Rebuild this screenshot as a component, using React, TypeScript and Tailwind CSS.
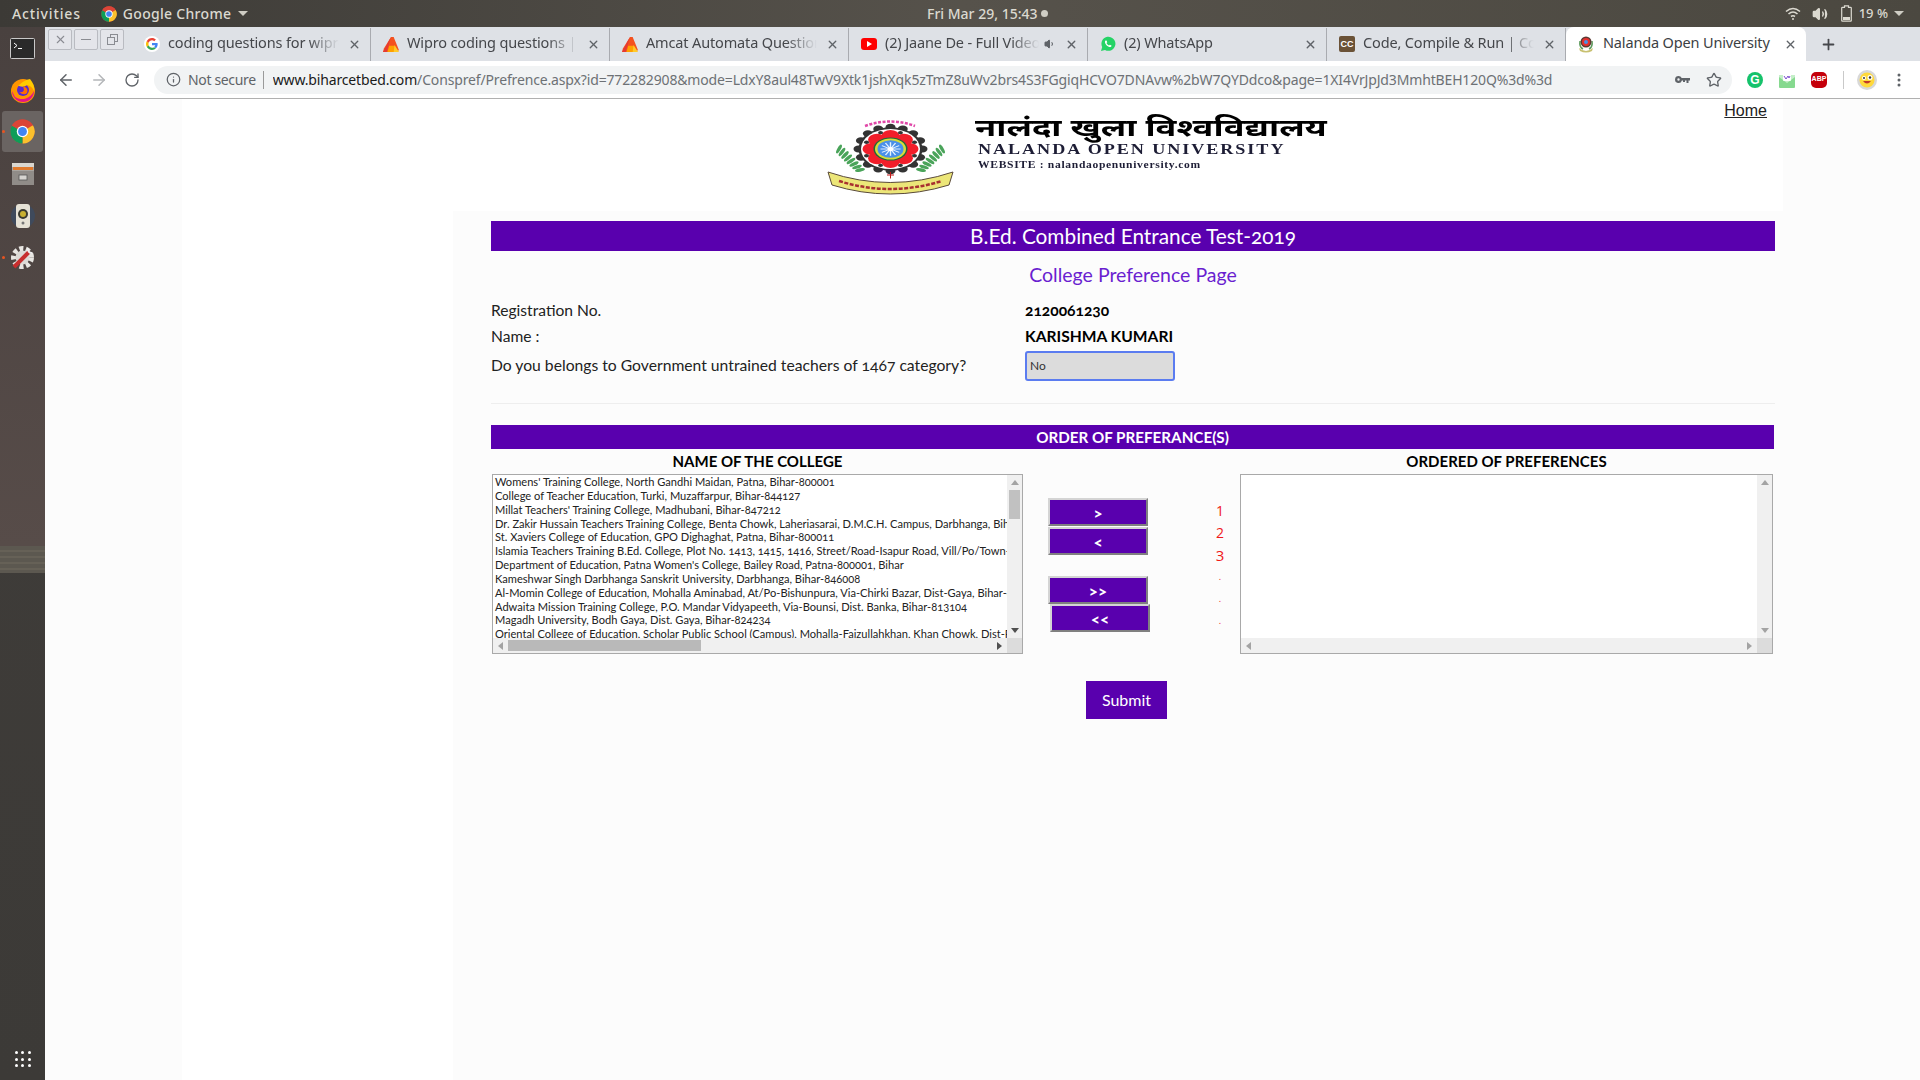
import React from "react";
import { ArrowLeft, ArrowRight, RotateCw, Info, Star, X, Plus, Volume2, Volume1 } from "lucide-react";

const colleges = [
  "Womens' Training College, North Gandhi Maidan, Patna, Bihar-800001",
  "College of Teacher Education, Turki, Muzaffarpur, Bihar-844127",
  "Millat Teachers' Training College, Madhubani, Bihar-847212",
  "Dr. Zakir Hussain Teachers Training College, Benta Chowk, Laheriasarai, D.M.C.H. Campus, Darbhanga, Bihar-846003",
  "St. Xaviers College of Education, GPO Dighaghat, Patna, Bihar-800011",
  "Islamia Teachers Training B.Ed. College, Plot No. 1413, 1415, 1416, Street/Road-Isapur Road, Vill/Po/Town-Phulwari Sharif",
  "Department of Education, Patna Women's College, Bailey Road, Patna-800001, Bihar",
  "Kameshwar Singh Darbhanga Sanskrit University, Darbhanga, Bihar-846008",
  "Al-Momin College of Education, Mohalla Aminabad, At/Po-Bishunpura, Via-Chirki Bazar, Dist-Gaya, Bihar-824231",
  "Adwaita Mission Training College, P.O. Mandar Vidyapeeth, Via-Bounsi, Dist. Banka, Bihar-813104",
  "Magadh University, Bodh Gaya, Dist. Gaya, Bihar-824234",
  "Oriental College of Education, Scholar Public School (Campus), Mohalla-Faizullahkhan, Khan Chowk, Dist-Patna, Bihar",
];

function ChromeLogo({ size = 16 }: { size?: number }) {
  return (
    <svg width={size} height={size} viewBox="0 0 48 48">
      <circle cx="24" cy="24" r="23" fill="#db4437" />
      <path d="M24 24 L44 12 A23 23 0 0 1 24 47 Z" fill="#fbc02d" />
      <path d="M24 24 L24 47 A23 23 0 0 1 3.5 13 Z" fill="#0f9d58" />
      <path d="M24 1 A23 23 0 0 1 44 12 L24 14 A10 10 0 0 0 15 19 L4 12 A23 23 0 0 1 24 1 Z" fill="#db4437" />
      <circle cx="24" cy="24" r="11" fill="#fff" />
      <circle cx="24" cy="24" r="8.5" fill="#4285f4" />
    </svg>
  );
}

function GoogleIcon() {
  return (
    <svg width="16" height="16" viewBox="0 0 48 48">
      <circle cx="24" cy="24" r="24" fill="#fff" />
      <path d="M41 24.5c0-1.300-.1-2.300-.3-3.400H24v6.300h9.700c-.4 2.200-1.700 4-3.600 5.300l5.600 4.300C39 34 41 29.700 41 24.500z" fill="#4285f4" />
      <path d="M24 42c4.700 0 8.700-1.600 11.700-4.200l-5.600-4.300c-1.600 1.100-3.600 1.700-6.100 1.700-4.600 0-8.600-3.100-10-7.300l-5.800 4.500C11.100 38.200 17.100 42 24 42z" fill="#34a853" />
      <path d="M14 27.900c-.4-1.100-.6-2.400-.6-3.900s.2-2.700.6-3.900l-5.800-4.500C7 18 6 20.900 6 24s1 6 2.200 8.400z" fill="#fbbc05" />
      <path d="M24 13c2.600 0 4.900.9 6.700 2.600l5-5C32.700 7.800 28.700 6 24 6 17.100 6 11.100 9.800 8.200 15.600l5.800 4.500c1.400-4.200 5.400-7.100 10-7.100z" fill="#ea4335" />
    </svg>
  );
}

function AmcatIcon() {
  return (
    <svg width="18" height="17" viewBox="0 0 18 17">
      <path d="M9 0 L12 0 L18 15 L13 17 L0 17 L1 13 Z" fill="#f4511e" />
      <path d="M9 0 L4 17 L0 17 Z" fill="#e53935" />
      <path d="M7 10 L13 10 L16 17 L5 17 Z" fill="#ffa000" />
      <path d="M13 9 L18 17 L12 17 Z" fill="#ffca28" />
    </svg>
  );
}

function YoutubeIcon() {
  return (
    <svg width="16" height="14" viewBox="0 0 16 14">
      <rect x="0" y="1" width="16" height="12" rx="3" fill="#f00" />
      <path d="M6 4 L11 7 L6 10 Z" fill="#fff" />
    </svg>
  );
}

function WhatsappIcon() {
  return (
    <svg width="16" height="16" viewBox="0 0 16 16">
      <path d="M1 15 L2.200 11 A7 7 0 1 1 5 13.900 Z" fill="#25d366" />
      <path d="M5.500 4.500 C4.500 5.500 4.800 7.300 6.500 9.200 C8.300 11 10.200 11.500 11.300 10.500 L11.500 9.500 L9.800 8.700 L9 9.500 C8 9 7 8 6.500 7 L7.300 6.200 L6.500 4.500 Z" fill="#fff" />
    </svg>
  );
}

function CcIcon() {
  return (
    <div className="flex h-[16px] w-[16px] items-center justify-center rounded-[2px] bg-[#6b5237] font-['Liberation_Sans',sans-serif] text-[9px] font-bold leading-none text-white">
      CC
    </div>
  );
}

function MiniSeal() {
  return (
    <svg width="18" height="18" viewBox="0 0 18 18">
      <path d="M2 13 Q9 19 16 13 L15 16 Q9 19 3 16 Z" fill="#c8c070" />
      <path d="M3 6 Q2 12 6 14 M15 6 Q16 12 12 14" stroke="#5c9a5c" strokeWidth="1.500" fill="none" />
      <circle cx="9" cy="7" r="5.500" fill="#5c3a32" />
      <circle cx="9" cy="7" r="4" fill="#e53030" />
      <circle cx="9" cy="7" r="2" fill="#4a90e2" />
    </svg>
  );
}

function Seal() {
  const petals = [0, 45, 90, 135, 180, 225, 270, 315];
  const scallops = Array.from({ length: 16 }, (_, i) => i * 22.5);
  const leaves = [0, 1, 2, 3, 4, 5, 6, 7];
  return (
    <svg width="127" height="78" viewBox="0 0 127 78" className="shrink-0">
      <path d="M38 7 Q63 -2 88 7" fill="none" stroke="#e048a8" strokeWidth="2.500" strokeDasharray="3 1.500" />
      {leaves.map((i) => (
        <g key={i}>
          <ellipse cx={12 + i * 3} cy={30 + i * 3} rx="5" ry="1.700" fill="#4aa45a" transform={`rotate(${-60 + i * 7} ${12 + i * 3} ${30 + i * 3})`} />
          <ellipse cx={115 - i * 3} cy={30 + i * 3} rx="5" ry="1.700" fill="#4aa45a" transform={`rotate(${60 - i * 7} ${115 - i * 3} ${30 + i * 3})`} />
        </g>
      ))}
      <g transform="translate(63.500 30) scale(1 .68)">
        {scallops.map((a) => (
          <circle key={a} cx={32 * Math.cos((a * Math.PI) / 180)} cy={32 * Math.sin((a * Math.PI) / 180)} r="5" fill="#333" />
        ))}
        <circle r="32" fill="#333" />
        <circle r="29.500" fill="#fff" />
        {petals.map((a) => (
          <ellipse key={a} cx={19 * Math.cos((a * Math.PI) / 180)} cy={19 * Math.sin((a * Math.PI) / 180)} rx="9" ry="9" fill="#f21e2a" />
        ))}
        {petals.map((a) => (
          <circle key={a} cx={26 * Math.cos(((a + 22.5) * Math.PI) / 180)} cy={26 * Math.sin(((a + 22.5) * Math.PI) / 180)} r="2.500" fill="#333" />
        ))}
        <circle r="17" fill="#1d6a3a" />
        <circle r="15.500" fill="#d6dc3a" />
        <circle r="13" fill="#4a90e8" />
        {[0, 30, 60, 90, 120, 150].map((a) => (
          <rect key={a} x="-10" y="-.7" width="20" height="1.400" fill="#e8f2ff" transform={`rotate(${a})`} />
        ))}
        <circle r="3" fill="#fff" />
      </g>
      <path d="M1 53 Q63 74 126 53 L122 66 Q63 84 5 66 Z" fill="#ece678" stroke="#5a4a3a" strokeWidth="1" />
      <path d="M12 62 Q63 78 115 62" fill="none" stroke="#a83030" strokeWidth="2.500" strokeDasharray="4 1.500" />
      <path d="M60 56 h7 M63.500 53 v6.500" stroke="#c01818" strokeWidth="1" />
    </svg>
  );
}

function Tab({ icon, title, muted }: { icon: React.ReactNode; title: string; muted?: boolean }) {
  return (
    <div className="flex h-[33px] w-[239px] shrink-0 items-center border-r border-[#a9abb0] pl-[12px] pr-[9px]">
      <div className="flex w-[16px] shrink-0 items-center justify-center">{icon}</div>
      <div className="ml-[8px] min-w-0 flex-1 overflow-hidden whitespace-nowrap pb-[2px] text-[14.5px] tracking-[-0.15px] text-[#45474b] [mask-image:linear-gradient(to_right,black_82%,transparent)]">
        {title}
      </div>
      {muted && <Volume1 size={12} className="ml-[5px] shrink-0 fill-[#5f6368] text-[#5f6368]" />}
      <X size={13} strokeWidth={2.5} className="ml-[9px] shrink-0 text-[#5f6368]" />
    </div>
  );
}

function WinBtn({ children }: { children: React.ReactNode }) {
  return (
    <div className="flex h-[21px] w-[24px] items-center justify-center rounded-[2px] border border-[#b9bbc1] bg-[#e4e5ea] text-[#8a8c92]">
      {children}
    </div>
  );
}

function DockItem({ children, active, dot }: { children: React.ReactNode; active?: boolean; dot?: boolean }) {
  return (
    <div className={`relative flex h-[41px] w-[41px] items-center justify-center rounded-[3px] ${active ? "bg-[#6a6462]" : ""}`}>
      {dot && <span className="absolute left-[-0.5px] top-[19px] h-[3px] w-[3px] rounded-full bg-[#e95420]" />}
      {children}
    </div>
  );
}

function ArrowUp() {
  return <div className="h-0 w-0 border-x-[4px] border-b-[5px] border-x-transparent border-b-[#a3a3a3]" />;
}
function ArrowDown() {
  return <div className="h-0 w-0 border-x-[4px] border-t-[5px] border-x-transparent border-t-[#505050]" />;
}
function ArrowDownLight() {
  return <div className="h-0 w-0 border-x-[4px] border-t-[5px] border-x-transparent border-t-[#a3a3a3]" />;
}
function ArrowLeftTri() {
  return <div className="h-0 w-0 border-y-[4px] border-r-[5px] border-y-transparent border-r-[#a3a3a3]" />;
}
function ArrowRightTri({ dark }: { dark?: boolean }) {
  return <div className={`h-0 w-0 border-y-[4px] border-l-[5px] border-y-transparent ${dark ? "border-l-[#505050]" : "border-l-[#a3a3a3]"}`} />;
}

function ListBox({ items, width }: { items: string[]; width: string }) {
  const filled = items.length > 0;
  return (
    <div className={`flex h-[180px] flex-col border border-[#a9a9a9] bg-white ${width}`}>
      <div className="flex min-h-0 flex-1">
        <div className="min-w-0 flex-1 overflow-hidden pl-[2px] text-[11.1px] leading-[13.85px] text-[#222]">
          {items.map((t) => (
            <div key={t} className="whitespace-nowrap">{t}</div>
          ))}
        </div>
        <div className="flex w-[15px] shrink-0 flex-col items-center bg-[#f0f0f0]">
          <div className="flex h-[15px] items-center justify-center"><ArrowUp /></div>
          {filled && <div className="h-[29px] w-[11px] bg-[#c1c1c1]" />}
          <div className="mt-auto flex h-[15px] items-center justify-center">{filled ? <ArrowDown /> : <ArrowDownLight />}</div>
        </div>
      </div>
      <div className="flex h-[15px] shrink-0 bg-[#f0f0f0]">
        <div className="flex w-[15px] items-center justify-center"><ArrowLeftTri /></div>
        {filled && <div className="my-[2px] w-[193px] bg-[#b9b9b9]" />}
        <div className="ml-auto flex w-[15px] items-center justify-center"><ArrowRightTri dark={filled} /></div>
        <div className="w-[15px] bg-[#dcdcdc]" />
      </div>
    </div>
  );
}

function MoveBtn({ label, className = "" }: { label: string; className?: string }) {
  return (
    <div className={`flex h-[28px] w-[100px] items-center justify-center border-2 border-b-[#808080] border-l-[#d4d4d4] border-r-[#808080] border-t-[#d4d4d4] bg-[#5900ae] text-[17px] font-bold leading-none text-white ${className}`}>
      {label}
    </div>
  );
}

export default function App() {
  return (
    <div className="flex h-screen w-full flex-col overflow-hidden bg-white font-['Noto_Sans',sans-serif]">
      {/* GNOME top bar */}
      <div className="flex h-[27px] shrink-0 items-center bg-gradient-to-r from-[#3c3a36] via-[#56524b] to-[#4b4840] text-[14px] text-[#dbd9d0]">
        <div className="flex w-[927px] shrink-0 items-center">
          <span className="ml-[12px] font-medium tracking-[0.85px]">Activities</span>
          <span className="ml-[20px]"><ChromeLogo size={16} /></span>
          <span className="ml-[6px] font-medium tracking-[0.3px]">Google Chrome</span>
          <div className="ml-[7px] h-0 w-0 border-x-[5px] border-t-[5px] border-x-transparent border-t-[#cfcdc4]" />
        </div>
        <span className="font-medium">Fri Mar 29, 15:43</span>
        <span className="ml-[4px] h-[7px] w-[7px] rounded-full bg-[#cfcdc4]" />
        <div className="ml-auto flex items-center pr-[16px]">
          <svg width="16" height="14" viewBox="0 0 16 14" fill="none" stroke="#dbd9d0" strokeWidth="1.600">
            <path d="M1 4.500 Q8 -1.500 15 4.500" />
            <path d="M3.500 7 Q8 3 12.500 7" />
            <path d="M6 9.500 Q8 8 10 9.500" />
            <circle cx="8" cy="12" r="1" fill="#dbd9d0" stroke="none" />
          </svg>
          <Volume2 size={16} className="ml-[11px] fill-[#dbd9d0] text-[#dbd9d0]" />
          <svg width="11" height="17" viewBox="0 0 11 17" className="ml-[13px]">
            <path d="M3.500 .8 h4 v1.500 h2 a.8.8 0 0 1 .8.8 v12.300 a.8.8 0 0 1 -.8.8 h-8 a.8.8 0 0 1 -.8-.8 V3.100 a.8.8 0 0 1 .8-.8 h2 z" fill="none" stroke="#dbd9d0" strokeWidth="1.200" />
            <rect x="2" y="12" width="7" height="3" fill="#dbd9d0" />
          </svg>
          <span className="ml-[7px] text-[13px] font-medium">19 %</span>
          <div className="ml-[6px] h-0 w-0 border-x-[5px] border-t-[5px] border-x-transparent border-t-[#cfcdc4]" />
        </div>
      </div>

      <div className="flex min-h-0 flex-1">
        {/* Dock */}
        <div className="flex w-[45px] shrink-0 flex-col items-center bg-gradient-to-b from-[#403d3a] to-[#3c3a37]">
          <div className="flex h-[519px] w-full flex-col items-center bg-gradient-to-b from-[#49413f] to-[#574c49] pt-[1px]">
            <DockItem>
              <svg width="25" height="21" viewBox="0 0 25 21">
                <rect x=".5" y=".5" width="24" height="20" rx="1" fill="#2a2a2a" stroke="#c9c9c9" />
                <path d="M4 5 L7 7.500 L4 10" stroke="#fff" strokeWidth="1" fill="none" />
                <path d="M8 10.500 H12" stroke="#fff" strokeWidth="1" />
              </svg>
            </DockItem>
            <DockItem>
              <svg width="26" height="26" viewBox="0 0 26 26">
                <circle cx="13" cy="14" r="12" fill="#ff9500" />
                <path d="M2 14 A11 11 0 0 0 24 14 A13 13 0 0 1 5 20 Z" fill="#e31587" />
                <circle cx="13" cy="13" r="6" fill="#592acb" />
                <path d="M8 9 Q14 3 20 2 Q25 8 24 14 Q22 9 17 8 Q14 11 9 9 Z" fill="#ffcb00" />
                <path d="M13 9 Q19 11 17 16 Q14 19 9 15 Q13 16 14 13 Z" fill="#ff6d00" />
              </svg>
            </DockItem>
            <div className="h-[1px]" />
            <DockItem active dot><ChromeLogo size={25} /></DockItem>
            <div className="h-[1px]" />
            <DockItem>
              <svg width="24" height="24" viewBox="0 0 24 24">
                <rect x="1" y="1" width="22" height="22" rx="2" fill="#a9a5a0" />
                <rect x="1" y="1" width="22" height="4" fill="#d9d6d0" />
                <rect x="2" y="5" width="20" height="3" fill="#e07a2e" />
                <rect x="1" y="9" width="22" height="14" fill="#908c88" />
                <rect x="8" y="13" width="8" height="5" fill="#d6d4d0" stroke="#555" strokeWidth=".8" />
              </svg>
            </DockItem>
            <div className="h-[1px]" />
            <DockItem>
              <svg width="24" height="26" viewBox="0 0 24 26">
                <circle cx="12" cy="13" r="12" fill="#3f4a5c" />
                <rect x="5" y="1" width="14" height="24" rx="3" fill="#e6e2d6" />
                <circle cx="12" cy="11" r="5" fill="#3a3a30" />
                <circle cx="12" cy="11" r="3" fill="#c8b030" />
                <circle cx="12" cy="20" r="1.500" fill="#777" />
              </svg>
            </DockItem>
            <div className="h-[1px]" />
            <DockItem dot>
              <svg width="25" height="25" viewBox="0 0 25 25">
                <circle cx="12.500" cy="12.500" r="9" fill="none" stroke="#e8e6e2" strokeWidth="5" strokeDasharray="4 2.500" />
                <circle cx="12.500" cy="12.500" r="7" fill="#dcdad6" />
                <path d="M4 22 L19 7" stroke="#c72e2e" strokeWidth="4" />
                <path d="M18 3 A4 4 0 0 0 22 8" stroke="#eee" strokeWidth="2" fill="none" />
              </svg>
            </DockItem>
          </div>
          <div className="h-[27px] w-full shrink-0 bg-[repeating-linear-gradient(180deg,#5c5850_0px,#5c5850_4px,#666157_4px,#666157_6px)]" />
          <div className="mb-[13px] mt-auto grid grid-cols-3 gap-[3.500px]">
            {Array.from({ length: 9 }, (_, i) => (
              <span key={i} className="h-[3px] w-[3px] rounded-full bg-white" />
            ))}
          </div>
        </div>

        {/* Chrome */}
        <div className="flex min-w-0 flex-1 flex-col">
          <div className="flex h-[34px] shrink-0 items-center bg-[#dee1e6] pl-[3px]">
            <div className="flex w-[84px] shrink-0 items-center gap-[2px] self-start pt-[2px]">
              <WinBtn><X size={13} strokeWidth={2} /></WinBtn>
              <WinBtn><span className="h-[1px] w-[10px] bg-[#8a8c92]" /></WinBtn>
              <WinBtn>
                <svg width="11" height="11" viewBox="0 0 11 11" fill="none" stroke="#8a8c92"><rect x="3.500" y=".5" width="7" height="7" /><rect x=".5" y="3.500" width="7" height="7" fill="#e4e5ea" /></svg>
              </WinBtn>
            </div>
            <Tab icon={<GoogleIcon />} title="coding questions for wipro" />
            <Tab icon={<AmcatIcon />} title="Wipro coding questions | Wipro" />
            <Tab icon={<AmcatIcon />} title="Amcat Automata Questions" />
            <Tab icon={<YoutubeIcon />} title="(2) Jaane De - Full Video" muted />
            <Tab icon={<WhatsappIcon />} title="(2) WhatsApp" />
            <Tab icon={<CcIcon />} title="Code, Compile & Run | CodeChef" />
            <div className="flex h-[34px] w-[240px] shrink-0 items-center rounded-t-[8px] bg-white pl-[11px] pr-[9px]">
              <div className="flex w-[18px] shrink-0 items-center justify-center"><MiniSeal /></div>
              <div className="ml-[8px] min-w-0 flex-1 overflow-hidden whitespace-nowrap pb-[2px] text-[14.5px] tracking-[-0.15px] text-[#3c4043]">Nalanda Open University</div>
              <X size={13} strokeWidth={2.5} className="ml-[9px] shrink-0 text-[#5f6368]" />
            </div>
            <Plus size={17} strokeWidth={2.5} className="ml-[14px] text-[#45474b]" />
          </div>

          <div className="flex h-[38px] shrink-0 items-center border-b border-[#b0b0b0] bg-white">
            <ArrowLeft size={18} strokeWidth={2} className="ml-[12px] text-[#5f6368]" />
            <ArrowRight size={18} strokeWidth={2} className="ml-[15px] text-[#b4b6b9]" />
            <RotateCw size={16} strokeWidth={2} className="ml-[16px] text-[#5f6368]" />
            <div className="ml-[14px] flex h-[28px] w-[1578px] shrink-0 items-center rounded-full bg-[#f1f3f4] pl-[12px]">
              <Info size={15} className="text-[#5f6368]" />
              <span className="ml-[7px] whitespace-nowrap text-[14px] tracking-[-0.35px] text-[#5f6368]">Not secure</span>
              <span className="ml-[7px] h-[18px] w-px bg-[#9a9a9a]" />
              <span className="ml-[9px] w-[1290px] shrink-0 overflow-hidden whitespace-nowrap text-[14px] tracking-[-0.15px] text-[#6d7175]">
                <span className="text-[#1a1a1a]">www.biharcetbed.com</span>/Conspref/Prefrence.aspx?id=772282908&amp;mode=LdxY8aul48TwV9Xtk1jshXqk5zTmZ8uWv2brs4S3FGgiqHCVO7DNAvw%2bW7QYDdco&amp;page=1XI4VrJpJd3MmhtBEH120Q%3d%3d
              </span>
              <svg width="15" height="8" viewBox="0 0 15 8" className="ml-auto" fill="#5f6368">
                <path d="M3.500 0 A3.500 3.500 0 0 1 6.700 2 H15 V4.500 H13.500 V7 H11.500 V4.500 H10 V6 H8 V4.500 H6.900 A3.500 3.500 0 1 1 3.500 0 Z M3.500 2.300 A1.200 1.200 0 1 0 3.500 4.700 A1.200 1.200 0 1 0 3.500 2.300 Z" fillRule="evenodd" />
              </svg>
              <Star size={16} strokeWidth={2} className="ml-[16px] mr-[10px] text-[#5f6368]" />
            </div>
            <div className="ml-[15px] flex h-[16px] w-[16px] items-center justify-center rounded-full bg-[#15c26b] font-['Liberation_Sans',sans-serif] text-[12px] font-bold text-white">G</div>
            <svg width="16" height="16" viewBox="0 0 16 16" className="ml-[16px]">
              <rect x="0" y="4" width="16" height="12" rx="1" fill="#86d98f" />
              <path d="M0 5 L8 11 L16 5 L16 3 L0 3 Z" fill="#c5efc9" />
              <rect x="4" y="1" width="8" height="8" rx="1" fill="#fff" />
              <path d="M5 4 L7 7 L9 4 L10 6 L11 4" stroke="#7d4fd0" fill="none" />
            </svg>
            <div className="ml-[16px] flex h-[16px] w-[16px] items-center justify-center rounded-[5px] bg-[#c4000b] font-['Liberation_Sans',sans-serif] text-[7px] font-bold text-white">ABP</div>
            <span className="ml-[16px] h-[18px] w-px bg-[#c9c9c9]" />
            <svg width="20" height="20" viewBox="0 0 20 20" className="ml-[13px]">
              <circle cx="10" cy="10" r="10" fill="#d8d8d8" />
              <circle cx="10" cy="10" r="7.500" fill="#ffd93b" />
              <circle cx="7" cy="8" r="2" fill="#fff" /><circle cx="13" cy="7.500" r="2.500" fill="#fff" />
              <circle cx="7" cy="8" r="1" fill="#333" /><circle cx="13" cy="7.500" r="1.200" fill="#333" />
              <path d="M6 11 Q10 16 14 11 Z" fill="#c0392b" />
            </svg>
            <svg width="4" height="14" viewBox="0 0 4 14" className="ml-[20px]" fill="#5f6368">
              <circle cx="2" cy="2" r="1.500" /><circle cx="2" cy="7" r="1.500" /><circle cx="2" cy="12" r="1.500" />
            </svg>
          </div>

          {/* Page */}
          <div className="flex min-h-0 flex-1 font-['Lato',sans-serif] [font-variant-numeric:oldstyle-nums]">
            <div className="w-[137px] shrink-0 bg-[#fcfcfc]" />
            <div className="w-[271px] shrink-0 bg-white" />
            <div className="w-[1330px] shrink-0 bg-[#fcfcfc]">
              <div className="flex h-[112px] bg-white pl-[374px] pr-[16px]">
                <div className="mt-[20px]"><Seal /></div>
                <div className="ml-[21px] pt-[14px] font-['Liberation_Serif',serif] font-bold text-[#1d1d35]">
                  <div className="origin-left scale-x-[1.44] whitespace-nowrap font-['Noto_Sans','Liberation_Serif',sans-serif] text-[24px] leading-[28px] text-black">नालंदा खुला विश्वविद्यालय</div>
                  <div className="ml-[3px] origin-left scale-x-[1.25] whitespace-nowrap text-[14.5px] leading-[16px] tracking-[1.55px]">NALANDA OPEN UNIVERSITY</div>
                  <div className="ml-[3px] mt-[1px] origin-left scale-x-[1.22] whitespace-nowrap text-[9.5px] leading-[14px] tracking-[0.55px]">WEBSITE : nalandaopenuniversity.com</div>
                </div>
                <a className="ml-auto mt-[3px] h-fit font-['Liberation_Sans',sans-serif] text-[16px] leading-[18px] text-[#222] underline">Home</a>
              </div>

              <div className="mt-[10px] pl-[38px]">
                <div className="flex h-[30px] w-[1284px] items-center justify-center bg-[#5900ae] text-[20.8px] text-white">
                  B.Ed. Combined Entrance Test-2019
                </div>
                <div className="flex h-[47px] w-[1284px] items-center justify-center text-[19.5px] text-[#6a1fd0]">
                  College Preference Page
                </div>
                <div className="flex h-[26px] items-center text-[15.6px] text-[#222]">
                  <div className="w-[534px]">Registration No.</div>
                  <div className="font-bold text-black">2120061230</div>
                </div>
                <div className="flex h-[26px] items-center text-[15.6px] text-[#222]">
                  <div className="w-[534px]">Name :</div>
                  <div className="font-bold text-black">KARISHMA KUMARI</div>
                </div>
                <div className="mt-[1px] flex h-[30px] items-center text-[15.7px] text-[#222]">
                  <div className="w-[534px]">Do you belongs to Government untrained teachers of 1467 category?</div>
                  <div className="flex h-[30px] w-[150px] items-center rounded-[3px] border-2 border-[#5b7cf0] bg-[#dcdcdc] pl-[3px] text-[12px] text-[#333]">No</div>
                </div>
                <div className="mt-[22px] h-px w-[1284px] bg-[#eeeeee]" />
                <div className="mt-[21px] flex h-[24px] w-[1283px] items-center justify-center bg-[#5900ae] text-[15.2px] font-bold text-white">
                  ORDER OF PREFERANCE(S)
                </div>

                <div className="flex items-start pl-[1px]">
                  <div>
                    <div className="mb-[1px] flex h-[24px] items-center justify-center text-[15px] font-bold text-black">NAME OF THE COLLEGE</div>
                    <ListBox items={colleges} width="w-[531px]" />
                  </div>
                  <div className="ml-[25px] flex w-[102px] flex-col pt-[49px]">
                    <MoveBtn label=">" />
                    <MoveBtn label="<" className="mt-[1px]" />
                    <MoveBtn label=">>" className="mt-[21px]" />
                    <MoveBtn label="<<" className="ml-[2px]" />
                  </div>
                  <div className="w-[90px] pl-[51px] pr-[1px] pt-[51px] text-center font-['Open_Sans',sans-serif] text-[14px] leading-[22px] text-[#f01818] [font-variant-numeric:lining-nums]">
                    <div>1</div>
                    <div>2</div>
                    <div className="text-[15px]">3</div>
                    <div className="text-[9px]">.</div>
                    <div className="text-[9px]">.</div>
                    <div className="text-[9px]">.</div>
                  </div>
                  <div>
                    <div className="mb-[1px] flex h-[24px] items-center justify-center text-[15px] font-bold text-black">ORDERED OF PREFERENCES</div>
                    <ListBox items={[]} width="w-[533px]" />
                  </div>
                </div>

                <div className="ml-[595px] mt-[27px] flex h-[38px] w-[81px] items-center justify-center bg-[#5900ae] text-[16px] text-white">
                  Submit
                </div>
              </div>
            </div>
            <div className="flex-1 bg-[#fcfcfc]" />
          </div>
        </div>
      </div>
    </div>
  );
}
